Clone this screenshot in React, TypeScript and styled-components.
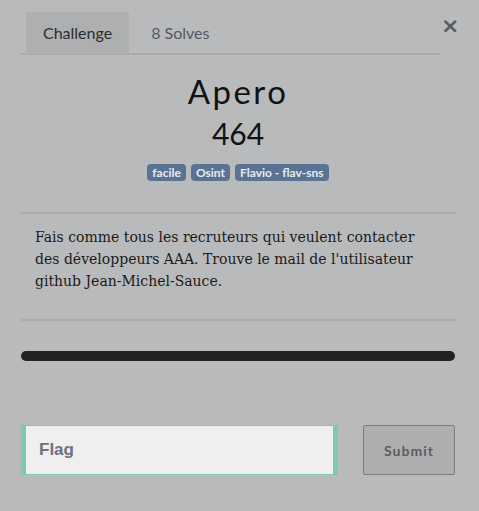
import styled, { createGlobalStyle } from "styled-components";

const Global = createGlobalStyle`
  html, body {
    margin: 0;
    padding: 0;
    background: #b9babc;
  }
  body {
    font-family: Lato, "Liberation Sans", sans-serif;
  }
`;

const tags = ["facile", "Osint", "Flavio - flav-sns"];

function App() {
  return (
    <>
      <Global />
      <Modal>
        <Header>
          <Tabs>
            <Tab active>Challenge</Tab>
            <Tab>8 Solves</Tab>
          </Tabs>
          <Close>×</Close>
        </Header>
        <Title>Apero</Title>
        <Points>464</Points>
        <TagRow>
          {tags.map((t) => (
            <Tag key={t}>{t}</Tag>
          ))}
        </TagRow>
        <Description>
          Fais comme tous les recruteurs qui veulent contacter des développeurs
          AAA. Trouve le mail de l'utilisateur github Jean-Michel-Sauce.
        </Description>
        <Progress />
        <SubmitRow>
          <FlagInput placeholder="Flag" autoFocus />
          <SubmitButton>Submit</SubmitButton>
        </SubmitRow>
      </Modal>
    </>
  );
}

export default App;

const Modal = styled.div`
  width: 434px;
  padding: 12px 24px 36px 21px;
  display: flex;
  flex-direction: column;
`;

const Header = styled.div`
  display: flex;
  align-items: flex-start;
`;

const Tabs = styled.div`
  width: 420px;
  flex-shrink: 0;
  display: flex;
  padding-left: 5px;
  box-sizing: border-box;
  border-bottom: 2px solid #aaabad;
`;

const Tab = styled.div<{ active?: boolean }>`
  height: 41px;
  display: flex;
  align-items: center;
  padding: 0 17px;
  margin-right: 5px;
  font-size: 16px;
  color: ${(p) => (p.active ? "#2b2c2e" : "#535a63")};
  background: ${(p) => (p.active ? "#aeafb1" : "transparent")};
  border-radius: 3px 3px 0 0;
`;

const Close = styled.div`
  margin-left: auto;
  margin-top: 4px;
  margin-right: 4px;
  font-size: 22px;
  line-height: 20px;
  font-weight: 700;
  color: #5a5b5d;
  font-family: "DejaVu Sans", sans-serif;
`;

const Title = styled.h1`
  margin: 16px 0 0;
  text-align: center;
  font-size: 33px;
  font-weight: 400;
  letter-spacing: 2.5px;
  color: #121212;
  line-height: 40px;
`;

const Points = styled.div`
  margin-top: 4px;
  text-align: center;
  font-size: 30px;
  color: #121212;
  line-height: 36px;
`;

const TagRow = styled.div`
  margin-top: 13px;
  display: flex;
  justify-content: center;
  gap: 5px;
`;

const Tag = styled.span`
  height: 17px;
  display: flex;
  align-items: center;
  padding: 0 5px;
  border-radius: 4px;
  background: #5b7393;
  color: #e8ecf1;
  font-size: 12px;
  font-weight: 700;
`;

const Description = styled.p`
  margin: 31px 0 0;
  padding: 12px 14px 27px;
  border-top: 2px solid #aaabad;
  border-bottom: 2px solid #aaabad;
  font-family: "DejaVu Serif", "Liberation Serif", serif;
  font-size: 14px;
  line-height: 22px;
  color: #1a1a1a;
`;

const Progress = styled.div`
  margin-top: 30px;
  height: 10px;
  border-radius: 5px;
  background: #222222;
`;

const SubmitRow = styled.div`
  margin-top: 64px;
  display: flex;
  gap: 25px;
`;

const FlagInput = styled.input`
  width: 317px;
  height: 50px;
  box-sizing: border-box;
  background: #efefef;
  border: 1px solid #7fcaa8;
  border-left-width: 5px;
  border-right-width: 5px;
  padding: 0 13px;
  font-family: "Liberation Sans", sans-serif;
  font-size: 17px;
  font-weight: 700;
  outline: none;
  caret-color: #000;
  &::placeholder {
    color: #6c737c;
  }
`;

const SubmitButton = styled.button`
  width: 92px;
  height: 50px;
  background: #aeaeae;
  border: 1px solid #7b7c7e;
  border-radius: 2px;
  color: #575e66;
  font-family: Lato, sans-serif;
  font-size: 14px;
  font-weight: 700;
  letter-spacing: 1px;
`;
